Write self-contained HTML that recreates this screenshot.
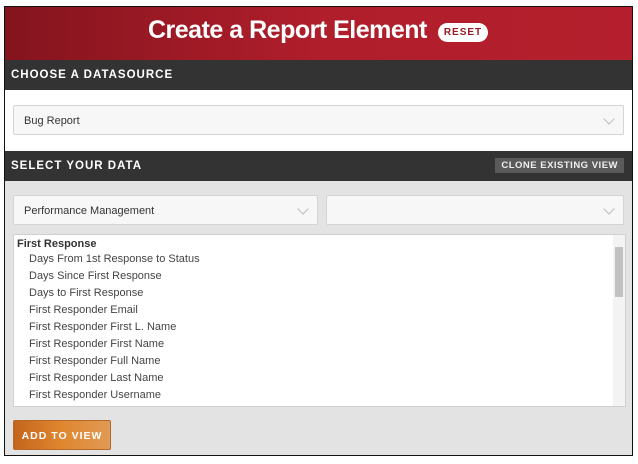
<!DOCTYPE html><html><head><style>
body{margin:0;width:638px;height:464px;background:#fff;font-family:"Liberation Sans",sans-serif;position:relative;overflow:hidden}
.box{position:absolute;left:4px;top:6px;width:627px;height:448px;border:1px solid #111;background:#e3e3e3}
.hdr{position:absolute;left:0;top:0;width:627px;height:53px;background:linear-gradient(90deg,#84141e,#b01e2b 50%,#b51f2d);border-bottom:1px solid #6a1018}
.hdr h1{margin:0;position:absolute;left:143px;top:9px;font-size:25px;color:#fff;font-weight:bold;letter-spacing:-0.5px}
.reset{position:absolute;left:433px;top:16px;width:50px;height:19px;border-radius:10px;background:#fff;color:#9a1a25;font-size:10px;font-weight:bold;text-align:center;line-height:19px;letter-spacing:1px}
.bar{position:absolute;left:0;width:627px;height:30px;background:#333;color:#fff;font-size:11.5px;font-weight:bold;letter-spacing:1px;line-height:30px;text-indent:6px}
.white{position:absolute;left:0;top:83px;width:627px;height:61px;background:#fff}
.sel{position:absolute;height:30px;background:#f7f7f7;border:1px solid #d4d4d4;border-radius:2px;font-size:11px;color:#333;line-height:30px;text-indent:10px;box-sizing:border-box}
.sel:after{content:"";position:absolute;right:10px;top:9px;width:7px;height:7px;border-right:1.5px solid #bbb;border-bottom:1.5px solid #bbb;transform:rotate(45deg)}
.clone{position:absolute;right:8px;top:7px;background:#5a5a5a;color:#eee;font-size:9.5px;letter-spacing:.5px;padding:0 6px;line-height:15px;text-indent:0}
.list{position:absolute;left:8px;top:227px;width:611px;height:171px;background:#fff;border:1px solid #d0d0d0;font-size:11px;color:#444}
.list div{position:absolute;left:15px;line-height:17px}
.sb{position:absolute;right:0;top:0;width:12px;height:171px;background:#f3f3f3}
.th{position:absolute;right:2px;top:12px;width:8px;height:50px;background:#c1c1c1}
.btn{position:absolute;left:8px;top:413px;width:98px;height:30px;border-radius:2px;background:linear-gradient(90deg,#c4651c,#e0872f 50%,#e19a55);border:1px solid #b36a2a;color:#fff;font-size:10.5px;font-weight:bold;letter-spacing:1px;line-height:30px;text-align:center;box-sizing:border-box}
</style></head><body><div class="box">
<div class="hdr"><h1>Create a Report Element</h1><div class="reset">RESET</div></div>
<div class="bar" style="top:53px">CHOOSE A DATASOURCE</div>
<div class="white"></div>
<div class="sel" style="left:8px;top:98px;width:611px;">Bug Report</div>
<div class="bar" style="top:144px">SELECT YOUR DATA<span class="clone">CLONE EXISTING VIEW</span></div>
<div class="sel" style="left:8px;top:188px;width:305px;">Performance Management</div>
<div class="sel" style="left:321px;top:188px;width:298px;"></div>
<div class="list">
<div style="left:3px;top:1px;font-weight:bold;color:#333">First Response</div>
<div style="top:16px">Days From 1st Response to Status</div>
<div style="top:33px">Days Since First Response</div>
<div style="top:50px">Days to First Response</div>
<div style="top:67px">First Responder Email</div>
<div style="top:84px">First Responder First L. Name</div>
<div style="top:101px">First Responder First Name</div>
<div style="top:118px">First Responder Full Name</div>
<div style="top:135px">First Responder Last Name</div>
<div style="top:152px">First Responder Username</div>
<div class="sb" style="left:auto"><div class="th" style="left:auto"></div></div>
</div>
<div class="btn">ADD TO VIEW</div>
</div></body></html>
